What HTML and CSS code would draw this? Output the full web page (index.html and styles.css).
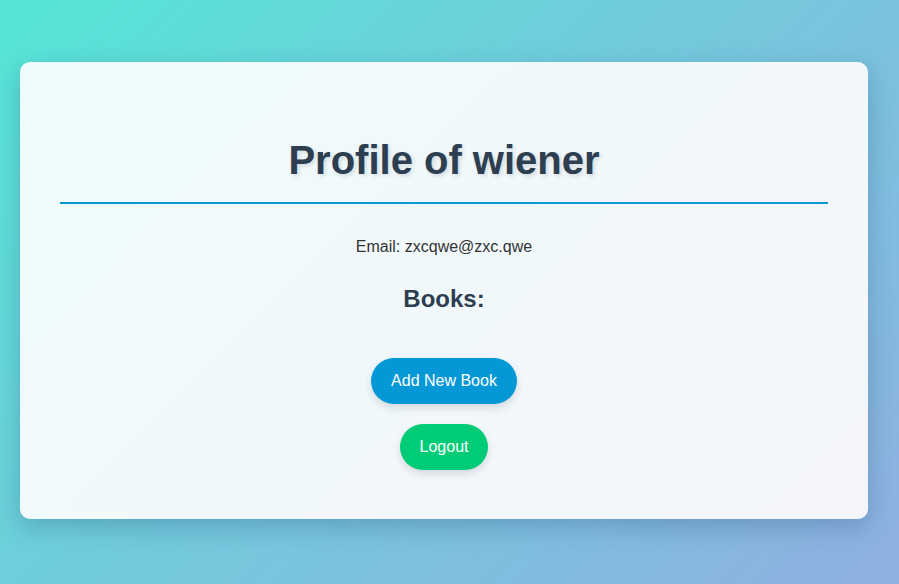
FILE: index.html
```html
<!DOCTYPE html>
<html lang="en">
<head>
<meta charset="utf-8">
<title>Profile</title>
<link rel="stylesheet" href="styles.css">
</head>
<body>
<div class="card">
  <h1 class="title">Profile of wiener</h1>
  <p class="email">Email: zxcqwe@zxc.qwe</p>
  <h2 class="books">Books:</h2>
  <div class="actions">
    <a class="btn btn-blue" href="#">Add New Book</a>
    <a class="btn btn-green" href="#">Logout</a>
  </div>
</div>
</body>
</html>
```
FILE: styles.css
```css
html, body {
  margin: 0;
  height: 100%;
}
body {
  font-family: "Liberation Sans", Arial, sans-serif;
  background: linear-gradient(135deg, #55e6d7 0%, #72cbdc 45%, #8fb0e0 100%);
  padding: 62px 31px 0 20px;
  box-sizing: border-box;
  overflow: hidden;
}
.card {
  width: 848px;
  height: 457px;
  box-sizing: border-box;
  padding: 76px 40px 40px;
  border-radius: 10px;
  background: linear-gradient(135deg, #effcfc 0%, #f1f8fb 50%, #f4f5fb 100%);
  box-shadow: 0 8px 24px rgba(30, 70, 110, 0.28);
  text-align: center;
}
.title {
  margin: 0;
  padding: 0 0 19px;
  font-size: 40px;
  font-weight: bold;
  color: #2c3e50;
  text-shadow: 2px 2px 4px rgba(0, 0, 0, 0.13);
  border-bottom: 2px solid #0598d3;
}
.email {
  margin: 34px 0 0;
  font-size: 16px;
  color: #333;
}
.books {
  margin: 29px 0 0;
  font-size: 24px;
  color: #2c3e50;
}
.actions {
  display: flex;
  flex-direction: column;
  align-items: center;
  gap: 20px;
  margin-top: 45px;
}
.btn {
  display: inline-block;
  padding: 14px 20px;
  font-size: 16px;
  line-height: 18px;
  color: #fff;
  text-decoration: none;
  border-radius: 25px;
  box-shadow: 0 4px 8px rgba(0, 0, 0, 0.12);
}
.btn-blue { background: #0598d6; }
.btn-green { background: #00cc77; }
```
